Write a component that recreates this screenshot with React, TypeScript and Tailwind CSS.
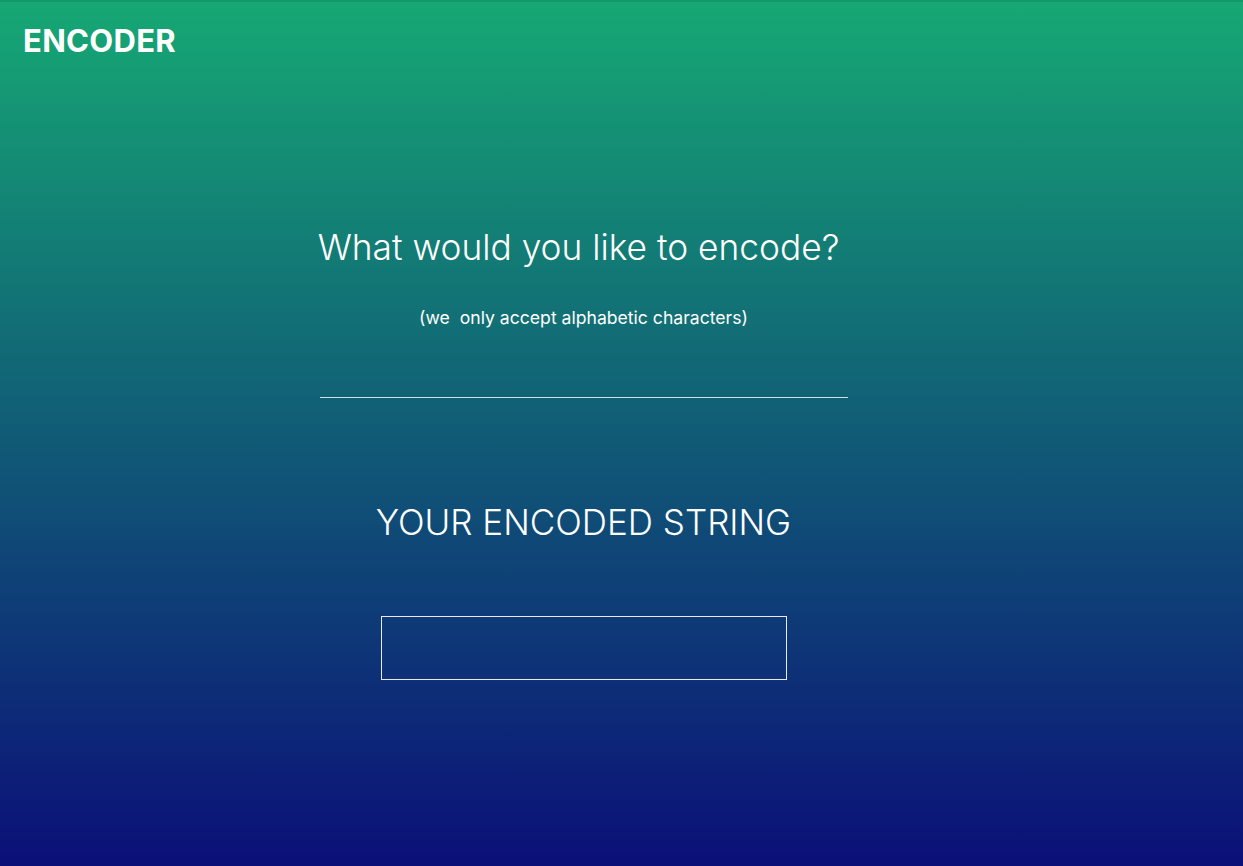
export default function App() {
  return (
    <div
      className="relative h-[866px] w-full overflow-hidden bg-[linear-gradient(to_bottom,#16a874,#0b0f78)] text-white"
      style={{ fontFamily: 'Inter, "Noto Sans", sans-serif' }}
    >
      <div className="h-[2px] w-full bg-[#12996a]" />
      <header className="px-[23px] pt-[21px]">
        <h1 className="text-[31px] font-bold leading-[36px] tracking-[0.01em]">ENCODER</h1>
      </header>

      <main className="flex flex-col items-center pr-[76px]">
        <h2 className="mt-[167px] mr-[10px] text-[35.3px] font-light leading-[44px]">
          What would you like to encode?
        </h2>
        <p className="mt-[36px] whitespace-pre text-[17.6px] font-normal leading-[24px]">
          (we  only accept alphabetic characters)
        </p>
        <input
          type="text"
          className="mt-[39px] w-[528px] border-b border-white/80 bg-transparent pb-1 text-white outline-none"
        />

        <h3 className="mt-[102px] text-[35px] font-light leading-[44px]">YOUR ENCODED STRING</h3>
        <div className="mt-[72px] h-[64px] w-[406px] border border-white/90" />
      </main>
    </div>
  )
}
